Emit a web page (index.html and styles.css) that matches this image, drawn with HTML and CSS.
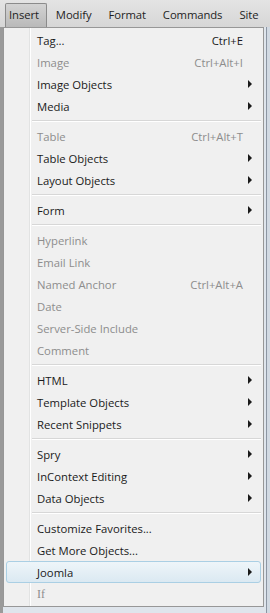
FILE: index.html
```html
<!DOCTYPE html>
<html lang="en">
<head>
    <meta charset="UTF-8">
    <title>Insert menu</title>
    <link rel="stylesheet" href="styles.css">
</head>
<body>
    <div class="menubar">
        <span class="menubar-item active">Insert</span>
        <span class="menubar-item">Modify</span>
        <span class="menubar-item">Format</span>
        <span class="menubar-item">Commands</span>
        <span class="menubar-item">Site</span>
    </div>

    <div class="menu">
        <div class="item"><span class="label">Tag...</span><span class="key">Ctrl+E</span></div>
        <div class="item disabled"><span class="label">Image</span><span class="key">Ctrl+Alt+I</span></div>
        <div class="item"><span class="label">Image Objects</span><span class="arrow"></span></div>
        <div class="item"><span class="label">Media</span><span class="arrow"></span></div>
        <div class="sep"></div>
        <div class="item disabled"><span class="label">Table</span><span class="key">Ctrl+Alt+T</span></div>
        <div class="item"><span class="label">Table Objects</span><span class="arrow"></span></div>
        <div class="item"><span class="label">Layout Objects</span><span class="arrow"></span></div>
        <div class="sep"></div>
        <div class="item"><span class="label">Form</span><span class="arrow"></span></div>
        <div class="sep"></div>
        <div class="item disabled"><span class="label">Hyperlink</span></div>
        <div class="item disabled"><span class="label">Email Link</span></div>
        <div class="item disabled"><span class="label">Named Anchor</span><span class="key">Ctrl+Alt+A</span></div>
        <div class="item disabled"><span class="label">Date</span></div>
        <div class="item disabled"><span class="label">Server-Side Include</span></div>
        <div class="item disabled"><span class="label">Comment</span></div>
        <div class="sep"></div>
        <div class="item"><span class="label">HTML</span><span class="arrow"></span></div>
        <div class="item"><span class="label">Template Objects</span><span class="arrow"></span></div>
        <div class="item"><span class="label">Recent Snippets</span><span class="arrow"></span></div>
        <div class="sep"></div>
        <div class="item"><span class="label">Spry</span><span class="arrow"></span></div>
        <div class="item"><span class="label">InContext Editing</span><span class="arrow"></span></div>
        <div class="item"><span class="label">Data Objects</span><span class="arrow"></span></div>
        <div class="sep"></div>
        <div class="item"><span class="label">Customize Favorites...</span></div>
        <div class="item"><span class="label">Get More Objects...</span></div>
        <div class="item hover"><span class="label">Joomla</span><span class="arrow"></span></div>
        <div class="item disabled"><span class="label if">If</span></div>
    </div>
</body>
</html>
```

FILE: styles.css
```css
body {
    margin: 0;
    padding: 0;
    font-family: 'Open Sans', 'Noto Sans', sans-serif;
    font-size: 11.3px;
    color: #1a1a1a;
    background: linear-gradient(to right, #9a9a9a 0, #9a9a9a 3px, #dfe5ec 3px, #dfe5ec 266px, #8c96a3 266px, #8c96a3 267px, #d2dae3 267px);
    height: 613px;
    overflow: hidden;
}

.menubar {
    display: flex;
    align-items: center;
    height: 27px;
    padding-left: 5px;
    background: linear-gradient(#e4e4e4, #d6d6d6);
    box-sizing: border-box;
    padding-top: 3px;
    white-space: nowrap;
    overflow: hidden;
}

.menubar-item {
    padding: 0 7px 0 4px;
    margin-right: 4px;
    height: 24px;
    line-height: 22px;
    border: 1px solid transparent;
    box-sizing: border-box;
    color: #1e1e1e;
    letter-spacing: -0.1px;
}

.menubar-item.active {
    background: linear-gradient(#d3d3d3, #b9b9b9);
    border-color: #8b8b8b;
    border-bottom: none;
    border-radius: 2px 2px 0 0;
    padding: 0 7px 0 3px;
}

.menu {
    width: 261px;
    margin-left: 3px;
    border: 1px solid #979797;
    padding: 1px 2px 1px;
    box-sizing: border-box;
    background: linear-gradient(to right, #f0f0f0 25px, #e2e3e3 25px, #e2e3e3 26px, #ffffff 26px, #ffffff 27px, #f0f0f0 27px);
}

.item {
    display: flex;
    align-items: center;
    height: 22px;
    padding: 0 8px 0 30px;
    box-sizing: border-box;
    border: 1px solid transparent;
    border-radius: 3px;
}

.item .label {
    flex: 1;
    white-space: nowrap;
}

.item .key {
    margin-right: 9px;
}

.item.disabled {
    color: #8d8d8d;
}

.arrow {
    width: 0;
    height: 0;
    border-left: 4px solid #1a1a1a;
    border-top: 4px solid transparent;
    border-bottom: 4px solid transparent;
}

.item.hover {
    background: linear-gradient(#eef5f9, #dbe9f2);
    border-color: #aacfe4;
}

.if {
    font-family: 'Liberation Serif', serif;
    font-size: 12px;
}

.sep {
    height: 8px;
    margin-left: 26px;
    background: linear-gradient(transparent 3px, #d7d7d7 3px, #d7d7d7 4px, #ffffff 4px, #ffffff 5px, transparent 5px);
}
```
